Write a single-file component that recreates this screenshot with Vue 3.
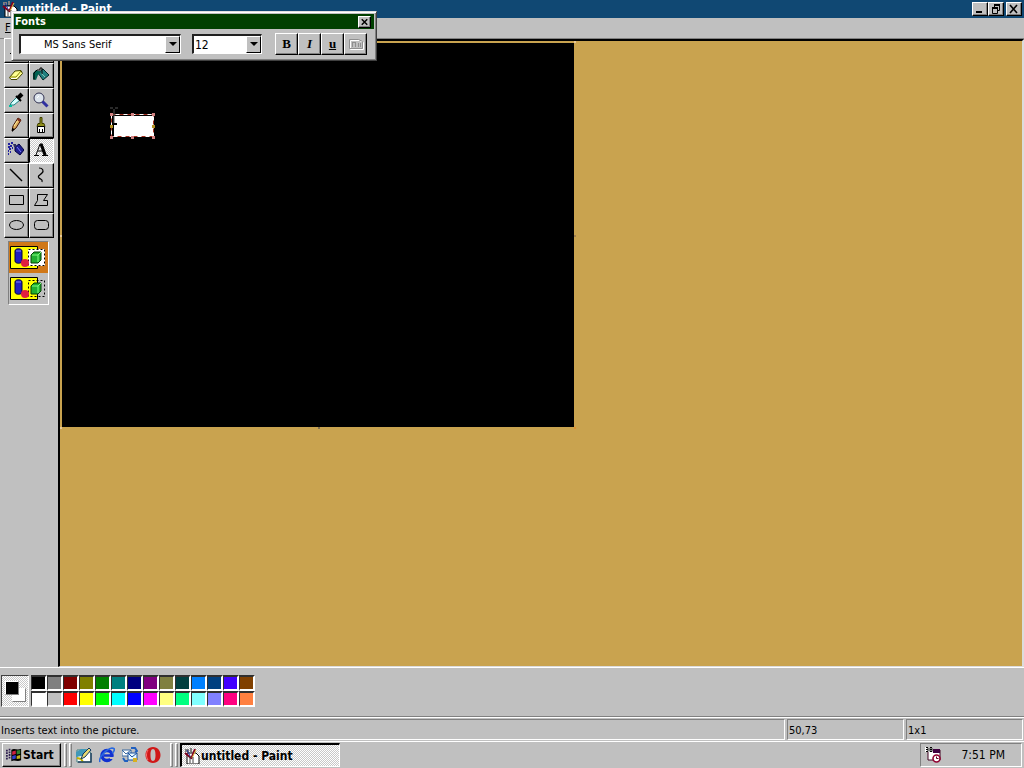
<script setup>
import { ref } from 'vue'

const font = ref('MS Sans Serif')
const size = ref('12')
const activeTool = ref('Text')
const opaque = ref(true)
const color = ref('#000')

const tools = [
  { name: 'Free-Form Select', icon: '<path d="M2 12l3-3 1-4 3-2 4 2 2 4-3 4-5-1z" fill="none" stroke="#000" stroke-dasharray="2 1"/>' },
  { name: 'Select', icon: '<path d="M1.5 3.5h13v9h-13z" fill="none" stroke="#000" stroke-dasharray="2 1"/>' },
  { name: 'Eraser', icon: '<path d="M1.500 10.500L7 4l6-.5 1.500 3L9 12.500H3z" fill="#ffff90" stroke="#444400"/><path d="M2 10h6l5-6" fill="none" stroke="#808000"/><path d="M3 11.500h5l1-1" fill="none" stroke="#fff"/>' },
  { name: 'Fill', icon: '<path d="M5 6l5-4 6 6-6 5z" fill="#208080" stroke="#002828"/><path d="M8 6l4 4" stroke="#80c0b0"/><path d="M0 12V6l3-3 5 2-3 3-2 5z" fill="#006050"/><path d="M1 13V6l3-3h3V1h2v6" fill="none" stroke="#000"/>' },
  { name: 'Pick Color', icon: '<path d="M3 13l-1 1 1-3 6-6 3 3-6 5z" fill="#d8ffff" stroke="#208080"/><path d="M8 4l5 5" stroke="#000" stroke-width="2"/><path d="M10 6l4-4" stroke="#000" stroke-width="4"/><path d="M1 13h3v2H1z" fill="#00c0a0"/>' },
  { name: 'Magnifier', icon: '<circle cx="6" cy="6" r="5" fill="#dce4ec" stroke="#303050"/><path d="M4 6l2-2" stroke="#fff"/><path d="M9.500 9.500l5 5" stroke="#3030a0" stroke-width="3"/>' },
  { name: 'Pencil', icon: '<path d="M4 14l1-5 5-8 3 2-5 8z" fill="#e0b060" stroke="#401000"/><path d="M6 9l4-6" stroke="#fff0a0"/><path d="M10 1l3 2-1 2-3-2z" fill="#803020"/><path d="M4 11v4l3-3z" fill="#000"/>' },
  { name: 'Brush', icon: '<path d="M7 .500h2v6h2l1 3H4l1-3h2z" fill="#909020" stroke="#404000"/><path d="M4.500 9.500h7v6h-7z" fill="#fff" stroke="#000"/><path d="M6.500 12v3M9.500 12v3" stroke="#000"/>' },
  { name: 'Airbrush', icon: '<path d="M7 5l4-3 5 6-4 5-5-4z" fill="#202090" stroke="#000040"/><path d="M9 5l4 5" stroke="#8080ff"/><path d="M5 2h3v3H6z" fill="#303060"/><path d="M0 2h2M2 4h2M0 5h2M3 1h2M1 7h2M0 9h1M4 6h1M2 10h1M0 12h1" stroke="#2020a0" stroke-width="2"/>' },
  { name: 'Text', icon: '<path d="M1 13.500h5M9 13.500h6" stroke="#000"/><path d="M3 13L7 2h2l4 11M5 9h5" fill="none" stroke="#000"/><path d="M8 2l4 11" stroke="#000" stroke-width="3"/>' },
  { name: 'Line', icon: '<path d="M2 2l12 12" stroke="#000" stroke-width="1.400"/>' },
  { name: 'Curve', icon: '<path d="M6 1c4 0 5 3 3 5s-5 3-3 5 4 1 3 4" fill="none" stroke="#000" stroke-width="1.200"/>' },
  { name: 'Rectangle', icon: '<path d="M1.500 3.500h14v9h-14z" fill="none" stroke="#000"/>' },
  { name: 'Polygon', icon: '<path d="M4.500 2.500h10l-4 6h4v5h-13l3-5z" fill="none" stroke="#000"/>' },
  { name: 'Ellipse', icon: '<ellipse cx="8.500" cy="8" rx="7" ry="4.500" fill="none" stroke="#000"/>' },
  { name: 'Rounded Rectangle', icon: '<rect x="1.500" y="3.500" width="14" height="9" rx="3" fill="none" stroke="#000"/>' },
]

const colors = [
  '#000', '#808080', '#800000', '#808000', '#008000', '#008080', '#000080', '#800080', '#808040', '#004040', '#0080ff', '#004080', '#4000ff', '#804000',
  '#fff', '#c0c0c0', '#f00', '#ff0', '#0f0', '#0ff', '#00f', '#f0f', '#ffff80', '#00ff80', '#80ffff', '#8080ff', '#ff0080', '#ff8040',
]

const launchers = [
  { name: 'Desktop', icon: '<path d="M1 3h10l4 3v9H1z" fill="#fff" stroke="#408080"/><path d="M0 5l5-3 6 0-5 7-6 1z" fill="#4098b8"/><path d="M1 11l4 1 2 3" fill="none" stroke="#c0b000" stroke-width="2"/><path d="M5 12l2-5 6-6 2 2-6 7z" fill="#e8d870" stroke="#103860"/><path d="M2 15h13V6" fill="none" stroke="#204060" stroke-width="1.500"/>' },
  { name: 'Internet', icon: '<circle cx="8" cy="8.500" r="5" fill="none" stroke="#1030d0" stroke-width="3.500"/><path d="M5 8.500h9" stroke="#1030d0" stroke-width="2.500"/><path d="M10 10h6v2h-5z" fill="#c0c0c0"/><path d="M1 15c-2-4 6-13 12-14 4 0 2 4 0 5" fill="none" stroke="#2868e0" stroke-width="1.600"/>' },
  { name: 'Mail', icon: '<path d="M0 3h9v6H0z" fill="#fff" stroke="#3868a0"/><path d="M0 3l4 4 5-4" fill="none" stroke="#3868a0"/><path d="M6 6h9v7H6z" fill="#e8f8ff" stroke="#1850a0"/><path d="M6 6l4 4 5-4" fill="none" stroke="#1850a0"/><path d="M9 1h4l2 3-2 1M1 11l2 3h3" fill="none" stroke="#2060c0" stroke-width="2"/><path d="M11 11h4v4h-4z" fill="#d8b020"/>' },
  { name: 'Opera', icon: '<path fill-rule="evenodd" d="M8 0c5 0 7.500 4 7.500 8S13 16 8 16 .5 12 .5 8 3 0 8 0zm0 2C6 2 5.500 5 5.500 8s.5 6 2.500 6 2.500-3 2.500-6S10 2 8 2z" fill="#d01818"/><path d="M3 3c-2 3-2 7 0 10" fill="none" stroke="#ff7070"/>' },
]

const paintIcon = '<path d="M3 5h9l3 3v8H3z" fill="#fff" stroke="#000"/><path d="M1 1h4v3H1zM6 0h2v4H6z" fill="#808080"/><path d="M1 5l6 5M11 1L7 11" stroke="#800020" stroke-width="2"/><path d="M12 2L8 10" stroke="#e0c040"/><path d="M6 8v7M9 9v6" stroke="#404040"/><path d="M3 2l3 6" stroke="#2030a0"/>'
</script>

<template>
  <div class="desktop">
    <header class="titlebar">
      <svg class="icon" viewBox="0 0 16 16" v-html="paintIcon"></svg>
      <span class="title">untitled - Paint</span>
      <div class="window-buttons">
        <button class="caption" aria-label="Minimize"><svg viewBox="0 0 12 10"><path d="M2 8h6" stroke="#000" stroke-width="2" /></svg></button>
        <button class="caption" aria-label="Restore"><svg viewBox="0 0 12 10"><path d="M4 1h6M2 4h6" stroke="#000" stroke-width="2" /><path d="M4.500 1v3M9.500 1v5.500H8M2.500 4v5.500h5V4" fill="none" stroke="#000" /></svg></button>
        <button class="caption close" aria-label="Close"><svg viewBox="0 0 12 10"><path d="M2 1l7 8M9 1L2 9" stroke="#000" stroke-width="1.600" /></svg></button>
      </div>
    </header>
    <nav class="menubar"><button class="menu" aria-label="File"><u>F</u></button></nav>

    <main class="workspace">
      <aside class="toolbox">
        <div class="tools">
          <button
            v-for="tool in tools"
            :key="tool.name"
            class="tool"
            :class="{ pressed: activeTool === tool.name }"
            :aria-label="tool.name"
            @click="activeTool = tool.name">
            <svg class="icon" viewBox="0 0 16 16" v-html="tool.icon"></svg>
          </button>
        </div>
        <div class="options">
          <button
            v-for="mode in [true, false]"
            :key="mode"
            class="option"
            :class="{ chosen: opaque === mode }"
            :aria-label="mode ? 'Opaque' : 'Transparent'"
            @click="opaque = mode">
            <svg viewBox="0 0 36 24">
              <path d="M.5.5h27v22H.5z" fill="#ff0" stroke="#000" />
              <path v-if="mode" d="M18 3h17v17H18z" fill="#fff" />
              <path d="M18.500 3.500h16v16h-16z" fill="none" stroke="#000" stroke-dasharray="2 2" />
              <path d="M5 5c0-3 7-3 7 0v10c0 3-7 3-7 0z" fill="#2020c0" stroke="#000040" />
              <path d="M6 5h5" stroke="#8080ff" />
              <circle cx="15" cy="17" r="4" fill="#e02040" />
              <path d="M21 9l3-3h7v8l-3 3h-7z" fill="#20b030" stroke="#004000" />
              <path d="M22 9h6l3-3M28 9v7" fill="none" stroke="#80ff80" />
            </svg>
          </button>
        </div>
      </aside>

      <section class="viewport">
        <div class="canvas">
          <i class="handle n-w"></i>
          <i class="handle n-e"></i>
          <i class="handle w"></i>
          <i class="handle e"></i>
          <i class="handle s"></i>
          <i class="handle s-w"></i>
          <i class="handle s-e"></i>
          <svg class="textbox" viewBox="0 0 48 34">
            <path d="M4 9h41v21H4z" fill="#fff" />
            <path d="M2.500 7.500h42v22h-42z" fill="none" stroke="#fff" />
            <path d="M2.500 7.500h42v22h-42z" fill="none" stroke="#a03020" stroke-dasharray="4 4" />
            <path d="M4.500 9v20" stroke="#000" />
            <path d="M1 6h3v3H1zM43 6h3v3h-3zM1 29h3v3H1zM43 29h3v3h-3zM22 6h3v3h-3zM22 29h3v3h-3z" fill="#d08080" />
            <path d="M1 18h3v3H1zM43 18h3v3h-3z" fill="#b09020" />
            <path d="M1 1h3M6 1h3M5 2v15" fill="none" stroke="#555" />
            <path d="M3 17h5" stroke="#000" stroke-width="2" />
          </svg>
        </div>
      </section>
    </main>

    <section class="palette">
      <div class="current">
        <span class="chip back"></span>
        <span class="chip front" :style="{ background: color }"></span>
      </div>
      <div class="swatches">
        <button
          v-for="c in colors"
          :key="c"
          class="swatch"
          :style="{ background: c }"
          :aria-label="c"
          @click="color = c"></button>
      </div>
    </section>

    <footer class="status">
      <span class="pane help">Inserts text into the picture.</span>
      <span class="pane">50,73</span>
      <span class="pane">1x1</span>
    </footer>

    <footer class="taskbar">
      <button class="start">
        <svg class="icon" viewBox="0 0 18 16">
          <path d="M0 3h2M0 6h2M0 9h2M0 12h2M3 2h2M3 5h2M3 8h2M3 11h2" stroke="#302050" stroke-width="2" />
          <path d="M6 2c4-2 6 1 11-1v13c-5 2-7-1-11 1z" fill="#000" />
          <path d="M7 4l4-1v4l-4 1z" fill="#d02040" />
          <path d="M12 3l4-.500v4l-4 1z" fill="#308030" />
          <path d="M7 9l4-1v4l-4 1z" fill="#3040d0" />
          <path d="M12 9l4-1v4l-4 .500z" fill="#c0b020" />
        </svg>
        Start
      </button>
      <i class="grip"></i>
      <i class="grip"></i>
      <div class="launch">
        <button v-for="item in launchers" :key="item.name" class="launcher" :aria-label="item.name">
          <svg class="icon" viewBox="0 0 16 16" v-html="item.icon"></svg>
        </button>
      </div>
      <i class="grip"></i>
      <i class="grip"></i>
      <button class="task">
        <svg class="icon" viewBox="0 0 16 16" v-html="paintIcon"></svg>
        untitled - Paint
      </button>
      <div class="tray">
        <svg class="icon" viewBox="0 0 16 16">
          <path d="M3 3h12v10H3z" fill="#fff" stroke="#400020" />
          <path d="M8 2h7v4H8z" fill="#400040" />
          <path d="M0 0h8v5H0z" fill="#fff" />
          <path d="M1 .500h2v4H1M1 2.500h2M5 .500h2v4H5zM5 2.500h2" fill="none" stroke="#000" />
          <circle cx="11.500" cy="11.500" r="3.500" fill="#fff" stroke="#900030" stroke-width="1.600" />
          <path d="M11.500 9.500v2h2" fill="none" stroke="#600020" />
        </svg>
        <span class="clock">7:51 PM</span>
      </div>
    </footer>

    <section class="fonts">
      <div class="fonts-title">
        <span>Fonts</span>
        <button class="caption small" aria-label="Close fonts"><svg viewBox="0 0 12 10"><path d="M3 2l6 6M9 2L3 8" stroke="#000" stroke-width="1.600" /></svg></button>
      </div>
      <div class="fonts-row">
        <div class="combo family">
          <select v-model="font" aria-label="Font">
            <option>MS Sans Serif</option>
          </select>
          <span class="arrow"></span>
        </div>
        <div class="combo points">
          <select v-model="size" aria-label="Size">
            <option>12</option>
          </select>
          <span class="arrow"></span>
        </div>
        <div class="styles">
          <button class="style bold">B</button>
          <button class="style italic">I</button>
          <button class="style underline">u</button>
          <button class="style" aria-label="Vertical text" disabled>
            <svg class="icon" viewBox="0 0 16 16"><path d="M2.500 4.500h9l4 2v7h-13z" fill="none" stroke="#fff" /><path d="M1.500 3.500h9l4 2v7h-13zM4.500 6v5M7.500 6v5M10.500 7v4M12.500 7v4M4 6.500h4" fill="none" stroke="#909090" /></svg>
          </button>
        </div>
      </div>
    </section>
  </div>
</template>

<style>
body {
  margin: 0;
}
</style>

<style scoped>
.desktop {
  position: relative;
  display: flex;
  flex-direction: column;
  min-height: 100vh;
  background: #c0c0c0;
  color: #000;
  font-family: "DejaVu Sans Condensed", "DejaVu Sans", sans-serif;
  font-size: 11px;
  line-height: 14px;
  overflow: hidden;
}

button,
select {
  margin: 0;
  padding: 0;
  border: 0;
  border-radius: 0;
  color: #000;
  background: #c0c0c0;
  font: inherit;
}

svg {
  display: block;
}

.icon {
  width: 16px;
  height: 16px;
  flex: none;
}

.titlebar {
  display: flex;
  align-items: center;
  gap: 2px;
  height: 18px;
  padding: 0 2px;
  background: #104873;
  color: #fff;
  font-size: 12px;
  font-weight: bold;
}

.title {
  flex: 1;
}

.window-buttons {
  display: flex;
}

.caption {
  display: flex;
  align-items: center;
  justify-content: center;
  box-sizing: border-box;
  width: 16px;
  height: 14px;
  border: 1px solid;
  border-color: #fff #000 #000 #fff;
  box-shadow: inset -1px -1px #808080;
}

.caption svg {
  width: 12px;
  height: 10px;
}

.close {
  margin-left: 2px;
}

.menubar {
  display: flex;
  align-items: center;
  height: 20px;
  padding: 0 5px;
  border-bottom: 1px solid #808080;
}

.workspace {
  flex: 1;
  display: flex;
}

.toolbox {
  box-sizing: border-box;
  width: 58px;
  padding: 0 4px;
}

.tools {
  display: grid;
  grid-template-columns: 25px 25px;
  grid-auto-rows: 25px;
  margin-top: -1px;
}

.tool {
  display: flex;
  align-items: center;
  justify-content: center;
  padding: 0 2px 2px 0;
  border: 1px solid;
  border-color: #fff #000 #000 #fff;
  box-shadow: inset -1px -1px #808080;
}

.pressed {
  border-color: #000 #fff #fff #000;
  box-shadow: none;
}

.pressed,
.current,
.task {
  background: repeating-conic-gradient(#fff 0 25%, #c8c8c8 0 50%) 0 0 / 2px 2px;
}

.options {
  box-sizing: border-box;
  width: 41px;
  margin: 3px 4px;
  border: 1px solid;
  border-color: #808080 #fff #fff #808080;
}

.option {
  display: flex;
  align-items: center;
  width: 39px;
  height: 31px;
  padding-left: 1px;
}

.option svg {
  width: 36px;
  height: 24px;
}

.chosen {
  background: #d07818;
}

.viewport {
  flex: 1;
  padding: 2px;
  border: solid;
  border-width: 2px 2px 1px;
  border-color: #000 #dcdcdc #dcdcdc #000;
  background: #c9a34f;
}

.canvas {
  position: relative;
  width: 512px;
  height: 384px;
  background: #000;
}

.handle {
  position: absolute;
  width: 2px;
  height: 2px;
  background: #e8c898;
}

.n-w { left: -2px; top: -2px; }
.n-e { right: -2px; top: -2px; }
.w { left: -2px; top: 50%; }
.e { right: -2px; top: 50%; background: #a08050; }
.s { left: 50%; bottom: -2px; background: #807050; }
.s-w { left: -2px; bottom: -2px; }
.s-e { right: -2px; bottom: -2px; background: #e09030; }

.textbox {
  position: absolute;
  left: 47px;
  top: 64px;
  width: 48px;
  height: 34px;
}

.palette {
  display: flex;
  align-items: flex-start;
  gap: 2px;
  box-sizing: border-box;
  height: 50px;
  padding: 7px 1px;
  border-top: 1px solid #fff;
  border-bottom: 1px solid #808080;
}

.current {
  position: relative;
  box-sizing: border-box;
  width: 28px;
  height: 32px;
  border: 1px solid;
  border-color: #404040 #fff #fff #404040;
}

.chip {
  position: absolute;
  box-sizing: border-box;
  width: 14px;
  height: 14px;
  border: 1px solid;
  border-color: #fff #808080 #808080 #fff;
  background: #fff;
}

.front {
  left: 3px;
  top: 5px;
}

.back {
  left: 10px;
  top: 12px;
}

.swatches {
  display: grid;
  grid-template-columns: repeat(14, 16px);
  grid-auto-rows: 16px;
}

.swatch {
  border: solid;
  border-width: 2px 2px 2px 1px;
  border-color: #303030 #fff #fff #303030;
}

.status {
  display: flex;
  gap: 2px;
  box-sizing: border-box;
  height: 24px;
  padding: 1px 1px 1px 0;
  border-top: 1px solid #fff;
}

.pane {
  box-sizing: border-box;
  width: 117px;
  padding: 4px 1px 2px;
  border: 1px solid;
  border-color: #808080 #fff #fff #808080;
}

.help {
  flex: 1;
  border-left: 0;
}

.taskbar {
  display: flex;
  align-items: stretch;
  gap: 3px;
  box-sizing: border-box;
  height: 27px;
  padding: 1px 2px;
  border-top: 1px solid #fff;
}

.start {
  display: flex;
  align-items: center;
  gap: 1px;
  box-sizing: border-box;
  width: 59px;
  padding-left: 3px;
  border: 1px solid;
  border-color: #fff #000 #000 #fff;
  box-shadow: inset -1px -1px #808080;
  font-size: 12px;
  font-weight: bold;
}

.grip {
  width: 1px;
  border: 1px solid;
  border-color: #fff #808080 #808080 #fff;
  margin-right: -1px;
}

.launch {
  display: flex;
  align-items: center;
  gap: 7px;
  width: 91px;
  padding-left: 2px;
}

.task {
  display: flex;
  align-items: center;
  gap: 1px;
  box-sizing: border-box;
  width: 160px;
  padding-left: 2px;
  border: solid;
  border-width: 2px 1px 1px 2px;
  border-color: #000 #fff #fff #000;
  font-size: 12px;
  font-weight: bold;
}

.tray {
  display: flex;
  align-items: center;
  justify-content: space-between;
  box-sizing: border-box;
  width: 102px;
  margin-left: auto;
  padding: 0 16px 0 4px;
  border: 1px solid;
  border-color: #808080 #fff #fff #808080;
  font-size: 12px;
}

.fonts {
  position: absolute;
  left: 11px;
  top: 11px;
  box-sizing: border-box;
  width: 366px;
  padding: 2px;
  border: 1px solid;
  border-color: #e0e0e0 #404040 #404040 #e0e0e0;
  box-shadow: inset 1px 1px #fff, inset -1px -1px #808080;
  background: #c0c0c0;
}

.fonts-title {
  display: flex;
  align-items: center;
  justify-content: space-between;
  height: 15px;
  padding: 0 3px 0 1px;
  background: #004000;
  color: #fff;
  font-weight: bold;
}

.small {
  width: 13px;
  height: 12px;
}

.fonts-row {
  display: flex;
  align-items: center;
  gap: 11px;
  height: 29px;
  padding-left: 5px;
}

.combo {
  display: flex;
  box-sizing: border-box;
  height: 20px;
  border: solid;
  border-width: 2px 1px 1px 2px;
  border-color: #202020 #fff #fff #202020;
  background: #fff;
}

.combo select {
  flex: 1;
  min-width: 0;
  padding-top: 2px;
  appearance: none;
  background: #fff;
}

.family {
  width: 162px;
}

.family select {
  padding-left: 23px;
}

.points {
  width: 70px;
}

.points select {
  padding-left: 1px;
  font-size: 12px;
}

.arrow {
  display: flex;
  align-items: center;
  justify-content: center;
  box-sizing: border-box;
  width: 15px;
  border: 1px solid;
  border-color: #fff #000 #000 #fff;
  background: #c0c0c0;
  pointer-events: none;
}

.arrow::after {
  content: "";
  border: 4px solid transparent;
  border-top-color: #000;
  border-bottom: 0;
}

.styles {
  display: flex;
  padding-left: 2px;
}

.style {
  display: flex;
  align-items: center;
  justify-content: center;
  box-sizing: border-box;
  width: 23px;
  height: 22px;
  border: 1px solid;
  border-color: #fff #000 #000 #fff;
  box-shadow: inset -1px -1px #808080;
  font-family: "Liberation Serif", serif;
  font-size: 13px;
  font-weight: bold;
}

.italic {
  font-style: italic;
}

.underline {
  text-decoration: underline;
}
</style>
